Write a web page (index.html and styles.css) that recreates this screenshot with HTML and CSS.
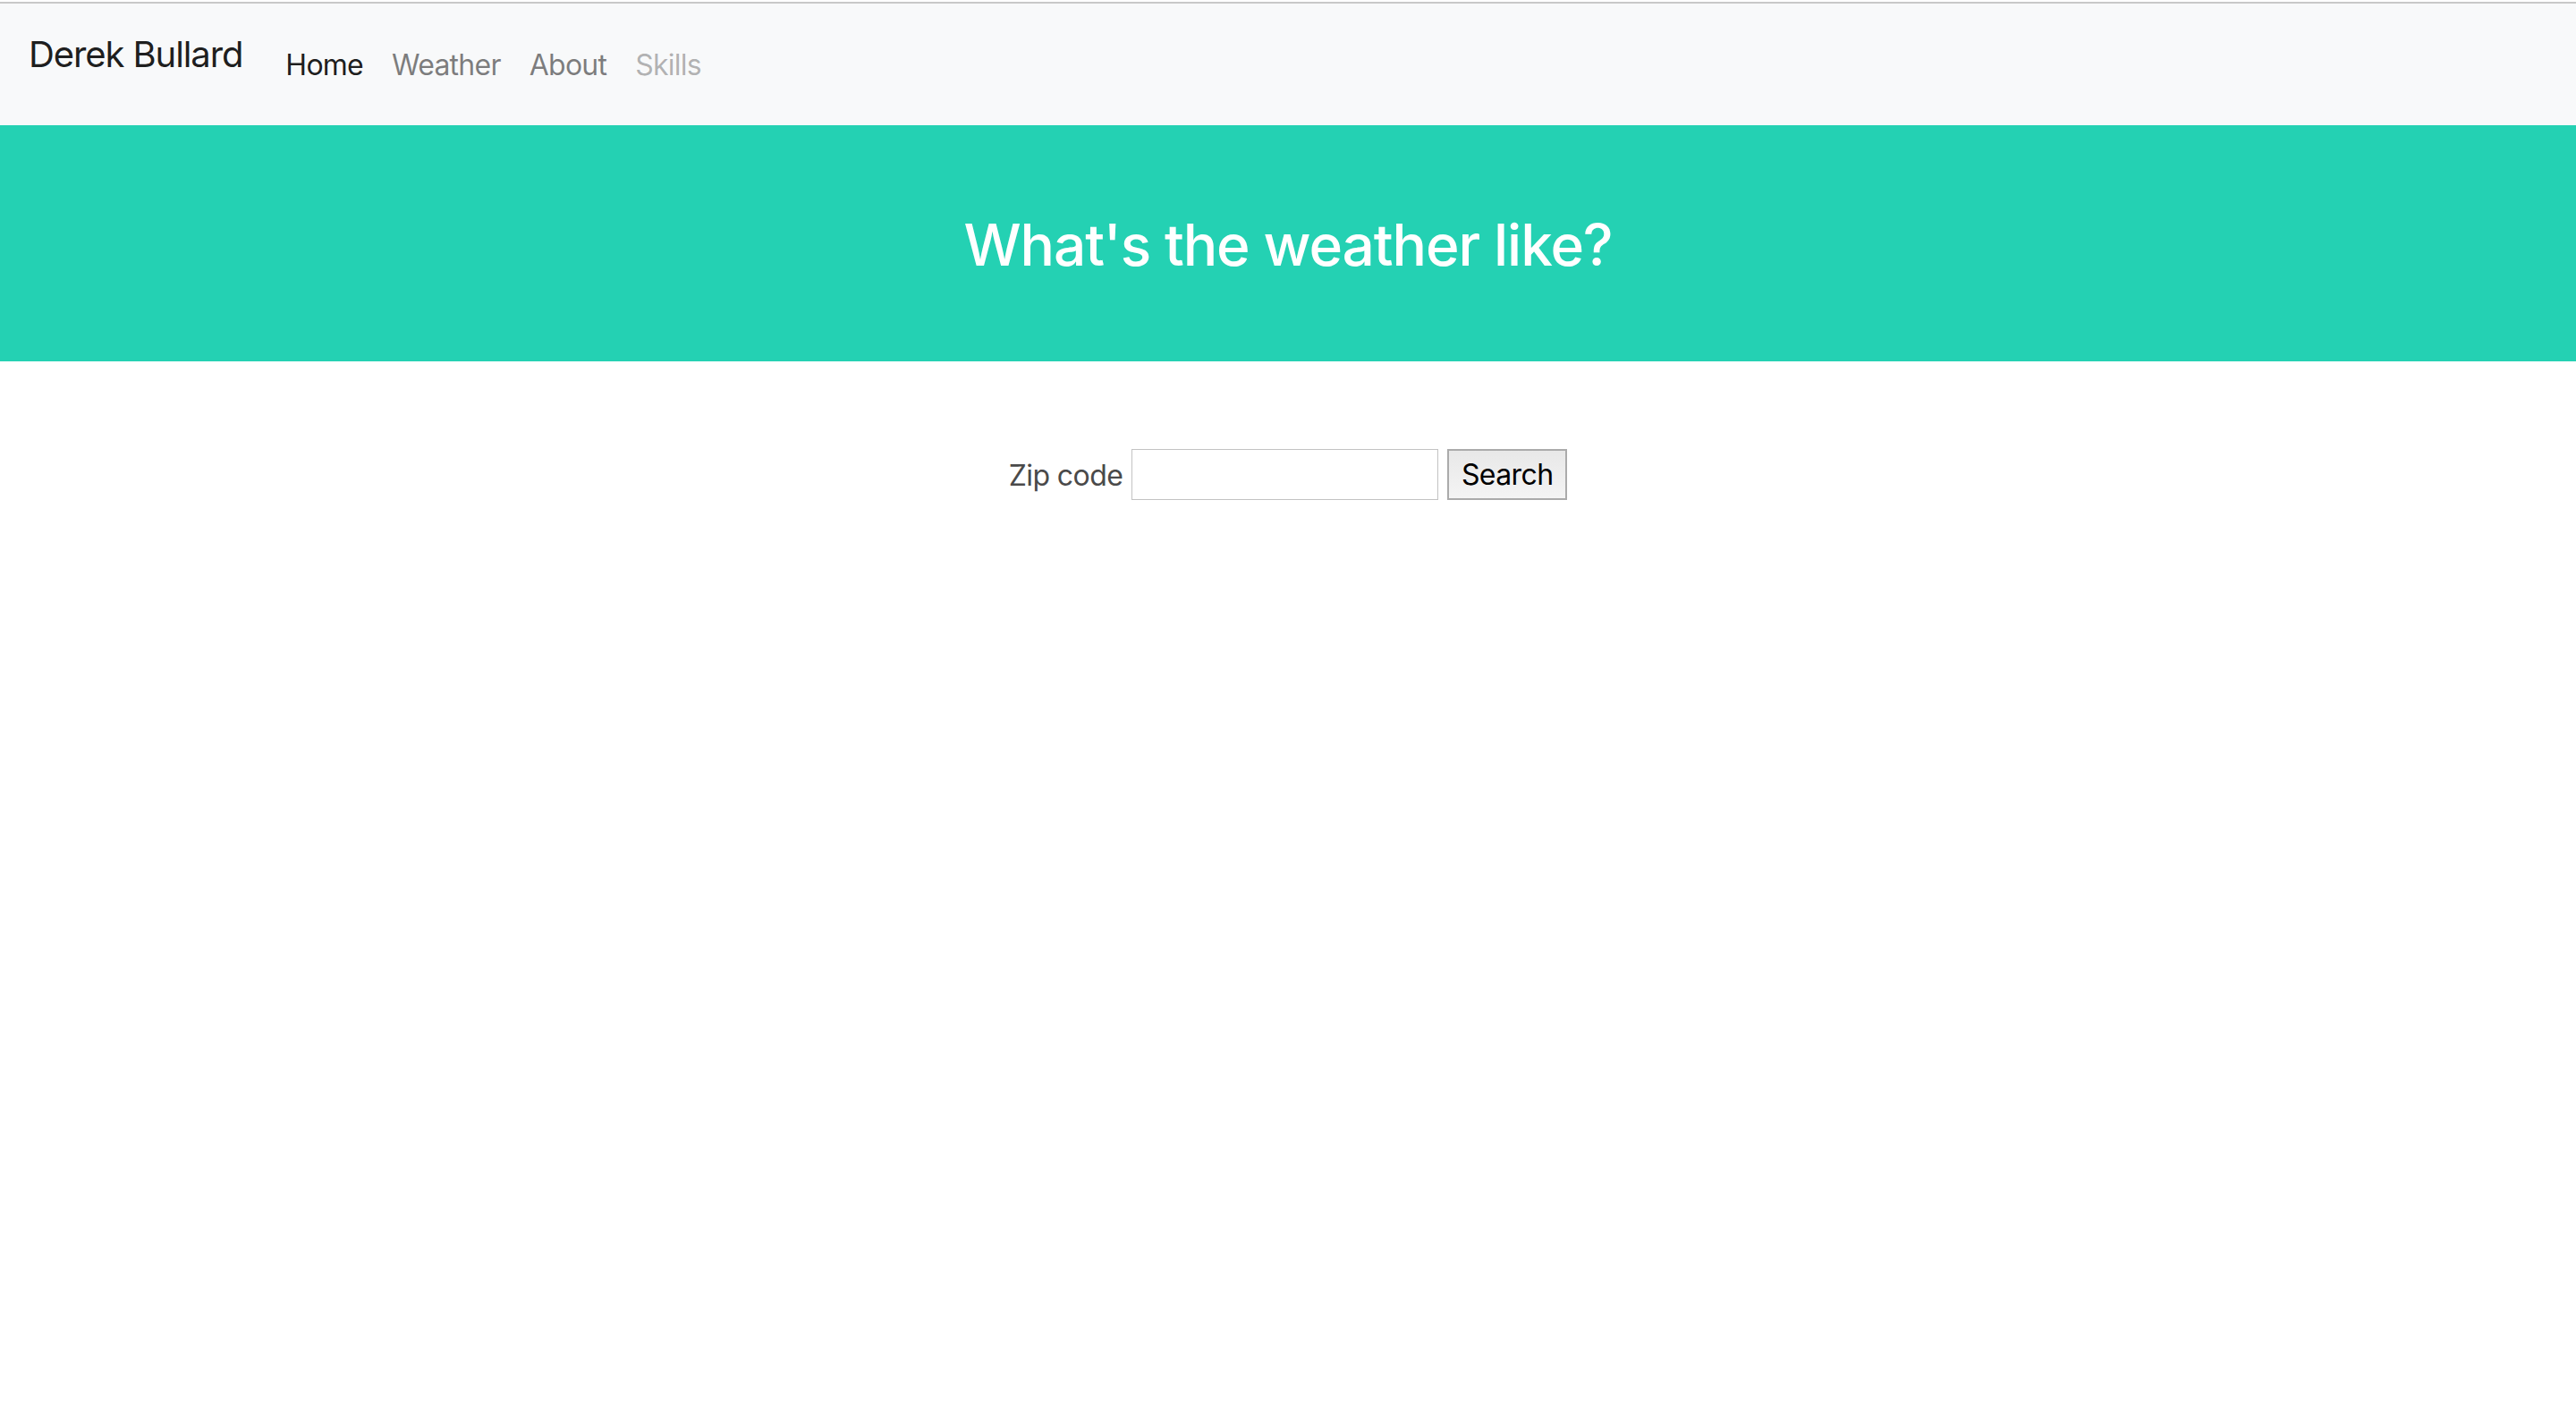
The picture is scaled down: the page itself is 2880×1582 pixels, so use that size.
FILE: index.html
```html
<!DOCTYPE html>
<html lang="en">
<head>
<meta charset="utf-8">
<title>Derek Bullard</title>
<link rel="stylesheet" href="styles.css">
</head>
<body>
<nav class="navbar">
  <a class="brand" href="#">Derek Bullard</a>
  <ul class="nav">
    <li><a class="nav-link active" href="#">Home</a></li>
    <li><a class="nav-link" href="#">Weather</a></li>
    <li><a class="nav-link" href="#">About</a></li>
    <li><a class="nav-link disabled" href="#">Skills</a></li>
  </ul>
</nav>
<header class="hero">
  <h1 class="hero-title">What's the weather like?</h1>
</header>
<main class="content">
  <form class="zip-form">
    <label class="zip-label" for="zip">Zip code</label>
    <input class="zip-input" id="zip" type="text">
    <button class="zip-button" type="button">Search</button>
  </form>
</main>
</body>
</html>
```

FILE: styles.css
```css
* { box-sizing: border-box; }
html, body {
  margin: 0;
  padding: 0;
  background: #ffffff;
}
body {
  font-family: Inter, "Liberation Sans", sans-serif;
  font-size: 32px;
  color: #212529;
  padding-top: 2px;
}
.navbar {
  display: flex;
  align-items: flex-start;
  height: 138px;
  padding: 0 32px;
  background: #f8f9fa;
  border-top: 2px solid #c8c8c8;
}
.brand {
  font-size: 40px;
  line-height: 60px;
  margin-top: 27px;
  margin-right: 32px;
  color: rgba(0, 0, 0, 0.9);
  text-decoration: none;
  letter-spacing: -1.1px;
}
.nav {
  display: flex;
  list-style: none;
  margin: 45px 0 0 0;
  padding: 0;
}
.nav-link {
  display: block;
  padding: 0 16px;
  line-height: 48px;
  font-size: 32px;
  color: rgba(0, 0, 0, 0.5);
  text-decoration: none;
  letter-spacing: -0.75px;
}
.nav-link.active { color: rgba(0, 0, 0, 0.9); }
.nav-link.disabled { color: rgba(0, 0, 0, 0.3); }
.hero {
  background: #24d1b3;
  height: 264px;
  display: flex;
  justify-content: center;
  padding-top: 95px;
}
.hero-title {
  margin: 0;
  font-size: 64px;
  line-height: 77px;
  font-weight: 500;
  color: #ffffff;
  letter-spacing: -1.1px;
}
.content {
  padding-top: 98px;
}
.zip-form {
  display: flex;
  justify-content: center;
  align-items: center;
  gap: 10px;
}
.zip-label {
  font-size: 32px;
  color: #4a4a4a;
  letter-spacing: -0.6px;
  position: relative;
  top: 1px;
}
.zip-input {
  width: 343px;
  height: 57px;
  border: 1px solid #c3c3c3;
  background: #fff;
  padding: 0 4px;
  font-family: inherit;
  font-size: 32px;
  outline: none;
}
.zip-button {
  width: 134px;
  height: 57px;
  border: 2px solid #ababab;
  background: linear-gradient(#e8e8e8, #f4f4f4);
  font-family: inherit;
  font-size: 32px;
  color: #000;
  padding: 0;
  letter-spacing: -0.6px;
}
```
